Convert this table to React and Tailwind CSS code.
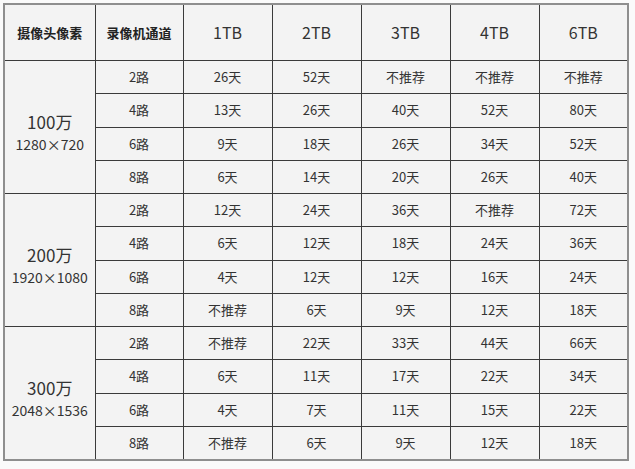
const sizes = ["1TB", "2TB", "3TB", "4TB", "6TB"];

const groups = [
  {
    name: "100万",
    res: "1280×720",
    rows: [
      ["2路", "26天", "52天", "不推荐", "不推荐", "不推荐"],
      ["4路", "13天", "26天", "40天", "52天", "80天"],
      ["6路", "9天", "18天", "26天", "34天", "52天"],
      ["8路", "6天", "14天", "20天", "26天", "40天"],
    ],
  },
  {
    name: "200万",
    res: "1920×1080",
    rows: [
      ["2路", "12天", "24天", "36天", "不推荐", "72天"],
      ["4路", "6天", "12天", "18天", "24天", "36天"],
      ["6路", "4天", "12天", "12天", "16天", "24天"],
      ["8路", "不推荐", "6天", "9天", "12天", "18天"],
    ],
  },
  {
    name: "300万",
    res: "2048×1536",
    rows: [
      ["2路", "不推荐", "22天", "33天", "44天", "66天"],
      ["4路", "6天", "11天", "17天", "22天", "34天"],
      ["6路", "4天", "7天", "11天", "15天", "22天"],
      ["8路", "不推荐", "6天", "9天", "12天", "18天"],
    ],
  },
];

const cell = "border border-[#3a3a3a] text-center align-middle p-0";

export default function App() {
  return (
    <div
      className="w-[635px] h-[469px] bg-[#fafafa] pt-[3px] pl-[3px] text-[#333]"
      style={{ fontFamily: '"Noto Sans CJK SC", "Noto Sans", sans-serif' }}
    >
      <div className="w-[626px] border-2 border-[#8e8e8e] bg-[#f3f3f3]">
        <table className="w-[622px] table-fixed border-collapse border-hidden">
          <colgroup>
            <col className="w-[90px]" />
            <col className="w-[88px]" />
            <col className="w-[89px]" />
            <col className="w-[89px]" />
            <col className="w-[89px]" />
            <col className="w-[89px]" />
            <col className="w-[88px]" />
          </colgroup>
          <thead>
            <tr className="h-[55px]">
              <th className={`${cell} text-[13px] font-bold text-[#222]`}>摄像头像素</th>
              <th className={`${cell} text-[13px] font-bold text-[#222]`}>录像机通道</th>
              {sizes.map((s) => (
                <th key={s} className={`${cell} text-[16px] font-normal`}>
                  {s}
                </th>
              ))}
            </tr>
          </thead>
          <tbody>
            {groups.map((g) =>
              g.rows.map((r, i) => (
                <tr key={g.name + i} className={i === 1 ? "h-[34px]" : "h-[33px]"}>
                  {i === 0 && (
                    <td rowSpan={4} className={`${cell} pt-[12px]`}>
                      <div className="text-[17px] leading-[22px]">{g.name}</div>
                      <div className="text-[14px] leading-[22px]">{g.res}</div>
                    </td>
                  )}
                  {r.map((v, j) => (
                    <td key={j} className={`${cell} text-[13px]`}>
                      {v}
                    </td>
                  ))}
                </tr>
              ))
            )}
          </tbody>
        </table>
      </div>
    </div>
  );
}
